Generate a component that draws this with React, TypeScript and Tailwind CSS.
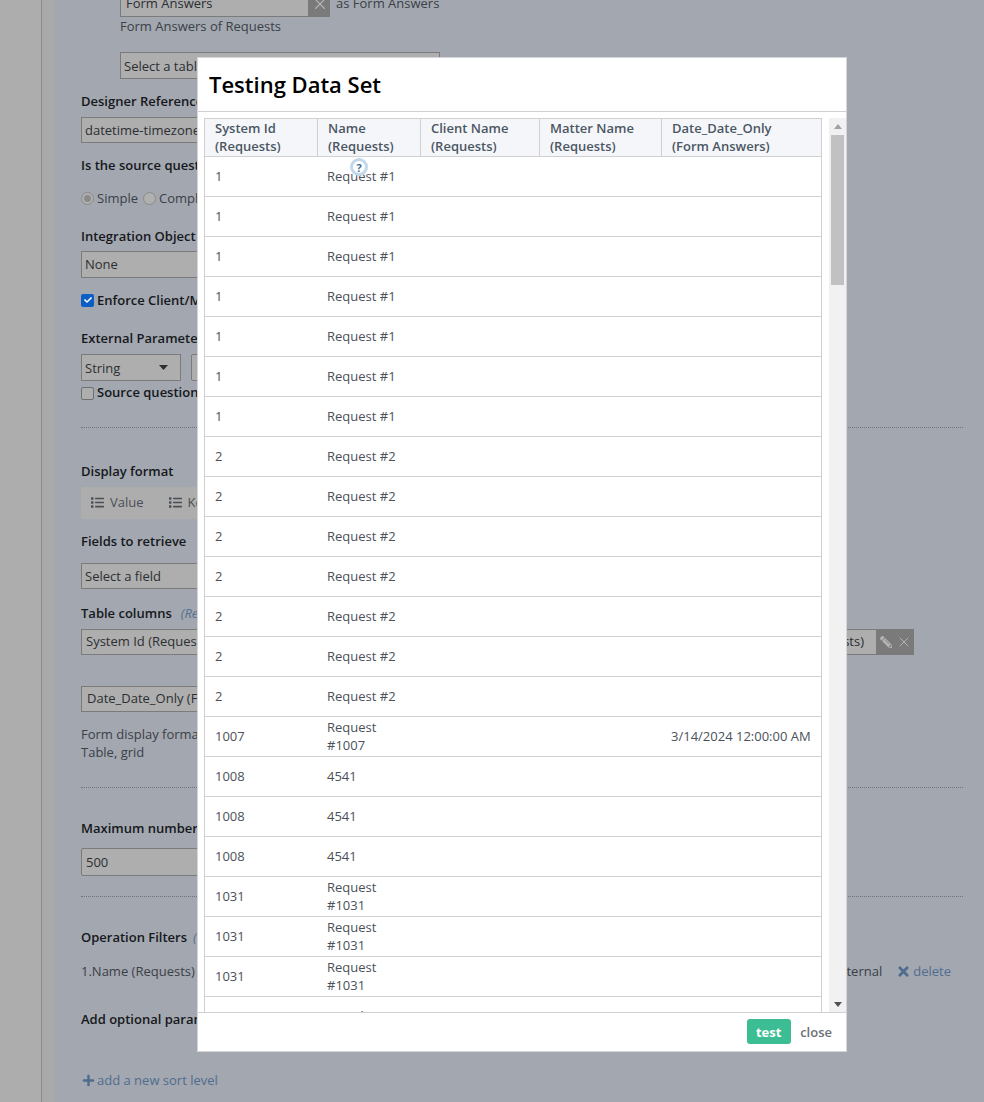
import React from "react";
import { FaList, FaPencilAlt, FaPlus, FaTimes, FaCheck } from "react-icons/fa";
import { X } from "lucide-react";

const rows: { id: string; name: string; date?: string }[] = [
  ...Array(7).fill({ id: "1", name: "Request #1" }),
  ...Array(7).fill({ id: "2", name: "Request #2" }),
  { id: "1007", name: "Request #1007", date: "3/14/2024 12:00:00 AM" },
  ...Array(3).fill({ id: "1008", name: "4541" }),
  ...Array(3).fill({ id: "1031", name: "Request #1031" }),
  { id: "1032", name: "Test data" },
];

const headers = [
  ["System Id", "(Requests)"],
  ["Name", "(Requests)"],
  ["Client Name", "(Requests)"],
  ["Matter Name", "(Requests)"],
  ["Date_Date_Only", "(Form Answers)"],
];

const Label = ({ className, children }: { className: string; children: React.ReactNode }) => (
  <div className={`h-[18px] font-semibold text-[#15181c] whitespace-nowrap ${className}`}>{children}</div>
);

const Field = ({ className, children }: { className: string; children: React.ReactNode }) => (
  <div className={`flex items-center border border-[#7b7b7b] bg-[#aeaeae] text-[#2b2f33] whitespace-nowrap ${className}`}>
    {children}
  </div>
);

const Dotted = ({ className }: { className: string }) => (
  <div className={`border-t border-dotted border-[#6f7278] ${className}`} />
);

const TestingModal = () => (
  <div className="absolute left-[197px] top-[57px] flex h-[995px] w-[650px] flex-col border border-[#d4d5d8] bg-white">
    {/* header */}
    <div className="flex h-[54px] shrink-0 items-center border-b border-[#d0d0d0] pb-[1px] pl-[11px] text-[22px] font-semibold text-black">
      Testing Data Set
    </div>

    {/* table + scrollbar */}
    <div className="flex min-h-0 flex-1 pl-[6px] pt-[6px]">
      <div className="h-full w-[618px] shrink-0 overflow-hidden border-x border-t border-[#d0d0d0]">
        <table className="w-[616px] table-fixed border-separate border-spacing-0 text-[13px] leading-[18px]">
          <colgroup>
            <col className="w-[113px]" />
            <col className="w-[103px]" />
            <col className="w-[119px]" />
            <col className="w-[122px]" />
            <col className="w-[159px]" />
          </colgroup>
          <thead>
            <tr className="h-[38px] bg-[#f5f6fa]">
              {headers.map((h, i) => (
                <th
                  key={h[0]}
                  className={`border-b border-[#d0d0d0] pb-[1px] pl-[10px] text-left font-semibold text-[#4b5663] ${i < 4 ? "border-r" : ""}`}
                >
                  {h[0]}
                  <br />
                  {h[1]}
                </th>
              ))}
            </tr>
          </thead>
          <tbody>
            {rows.map((r, i) => (
              <tr key={i} className="h-10 text-[#4a5159]">
                <td className="border-b border-[#d0d0d0] pb-[2px] pl-[10px]">{r.id}</td>
                <td className="border-b border-[#d0d0d0] pb-[2px] pl-[9px] pr-[10px]">{r.name}</td>
                <td className="border-b border-[#d0d0d0]" />
                <td className="border-b border-[#d0d0d0]" />
                <td className="border-b border-[#d0d0d0] pb-[2px] pl-[9px] whitespace-nowrap">{r.date}</td>
              </tr>
            ))}
          </tbody>
        </table>
      </div>
      <div className="ml-[7px] flex h-full w-[17px] shrink-0 flex-col items-center justify-between bg-[#f1f1f1] pb-[5px] pt-[6px]">
        <div className="flex w-full flex-col items-center">
          <svg width="8" height="5" viewBox="0 0 8 5" className="fill-[#a3a3a3]">
            <path d="M4 0 8 5H0z" />
          </svg>
          <div className="mt-[6px] h-[150px] w-[13px] bg-[#c1c1c1]" />
        </div>
        <svg width="8" height="5" viewBox="0 0 8 5" className="fill-[#505050]">
          <path d="M0 0h8L4 5z" />
        </svg>
      </div>
    </div>

    {/* footer */}
    <div className="flex h-[39px] shrink-0 items-center justify-end gap-[9px] border-t border-[#d0d0d0] pb-[1px] pr-[14px]">
      <button className="h-[25px] w-[44px] rounded-[3px] bg-[#3dbd94] pr-[1px] text-[13px] font-bold text-white">test</button>
      <button className="text-[13px] font-semibold text-[#6b7075]">close</button>
    </div>
  </div>
);

export default function App() {
  return (
    <div className="relative flex h-[1102px] w-[984px] overflow-hidden bg-[#a3a7af] text-[13px] leading-[18px] text-[#3a4048] [font-family:'Open_Sans',sans-serif]">
      {/* sidebar strip */}
      <div className="h-full w-[41px] shrink-0 bg-[#adadad]" />
      <div className="h-full w-[14px] shrink-0 border-l border-[#8c8c8c] bg-[#a9a9a9]" />

      {/* form behind the dialog */}
      <div className="w-[882px] shrink-0 pl-[26px]">
        <div className="-mt-[10px] ml-[39px] flex h-[27px] items-stretch">
          <Field className="w-[189px] pb-[1px] pl-[5px]">Form Answers</Field>
          <div className="flex w-[21px] items-center justify-center bg-[#7a7a7a] text-[#b5b5b5]">
            <X size={18} strokeWidth={1.5} />
          </div>
          <span className="ml-[6px] self-center pb-[1px]">as Form Answers</span>
        </div>
        <div className="ml-[39px] h-[18px]">Form Answers of Requests</div>
        <Field className="ml-[39px] mt-[17px] h-[27px] w-[320px] pl-[3px]">Select a table</Field>

        <Label className="mt-[13px]">Designer Reference Name</Label>
        <Field className="mt-[7px] h-[26px] w-[300px] pb-[1px] pl-[3px]">datetime-timezone</Field>

        <Label className="mt-[13px]">Is the source question</Label>
        <div className="mt-[15px] flex h-[18px] items-center">
          <span className="flex h-[13px] w-[13px] items-center justify-center rounded-full border border-[#8a8a8a] bg-[#b0b0b0]">
            <span className="h-[7px] w-[7px] rounded-full bg-[#8a8a8a]" />
          </span>
          <span className="ml-[3px]">Simple</span>
          <span className="ml-[5px] h-[13px] w-[13px] rounded-full border border-[#8a8a8a] bg-[#b0b0b0]" />
          <span className="ml-[3px]">Complex</span>
        </div>

        <Label className="mt-[20px]">Integration Object</Label>
        <Field className="mt-[6px] h-[27px] w-[300px] pb-[1px] pl-[3px]">None</Field>

        <div className="mt-[13px] flex h-[18px] items-center">
          <span className="flex h-[13px] w-[13px] items-center justify-center rounded-[2px] bg-[#0b5fc4] text-white">
            <FaCheck size={8} />
          </span>
          <span className="ml-[3px] font-semibold text-[#15181c]">Enforce Client/Matter</span>
        </div>

        <Label className="mt-[20px]">External Parameter</Label>
        <div className="mt-[7px] flex h-[27px] gap-[10px]">
          <Field className="w-[100px] justify-between pl-[3px] pr-[12px]">
            String
            <svg width="9" height="5" viewBox="0 0 9 5" className="fill-[#2b2f33]">
              <path d="M0 0h9L4.5 5z" />
            </svg>
          </Field>
          <div className="w-[200px] rounded-[2px] border border-[#7b7b7b] bg-[#aeaeae]" />
        </div>
        <div className="mt-[3px] flex h-[18px] items-center">
          <span className="h-[13px] w-[13px] rounded-[2px] border border-[#6f6f6f] bg-[#aeaeae]" />
          <span className="ml-[3px] -translate-y-[1px] font-semibold text-[#15181c]">Source question</span>
        </div>

        <Dotted className="mt-[25px] w-[882px]" />

        <Label className="mt-[34px]">Display format</Label>
        <div className="mt-[7px] flex h-[32px] w-[300px] items-center rounded-[3px] bg-[#adadad] pb-[2px] pl-[10px] text-[#4a4f55]">
          <FaList size={13} />
          <span className="ml-[6px]">Value</span>
          <span className="ml-[25px] flex items-center">
            <FaList size={13} />
            <span className="ml-[6px]">Key</span>
          </span>
        </div>

        <Label className="mt-[13px]">Fields to retrieve</Label>
        <Field className="mt-[13px] h-[26px] w-[300px] pb-[1px] pl-[3px]">Select a field</Field>

        <Label className="mt-[15px]">
          Table columns
          <span className="ml-[9px] font-normal italic text-[#55708f]">(Required)</span>
        </Label>
        <div className="mt-[7px] flex h-[26px] w-[833px] justify-between">
          <Field className="w-[300px] pb-[2px] pl-[4px]">System Id (Requests)</Field>
          <div className="flex">
            <Field className="w-[200px] justify-end pb-[2px] pr-[12px]">Matter Name (Requests)</Field>
            <div className="flex w-[37px] items-center justify-center gap-[4px] bg-[#7a7a7a] text-[#b5b5b5]">
              <FaPencilAlt size={12} className="-scale-x-100" />
              <X size={16} strokeWidth={1.5} />
            </div>
          </div>
        </div>
        <Field className="mt-[31px] h-[26px] w-[300px] pb-[2px] pl-[5px]">Date_Date_Only (Form Answers)</Field>

        <div className="mt-[13px] h-[18px]">Form display format</div>
        <div className="h-[18px]">Table, grid</div>

        <Dotted className="mt-[26px] w-[882px]" />

        <Label className="mt-[31px]">Maximum number of records</Label>
        <Field className="mt-[11px] h-[28px] w-[300px] rounded-[2px] border-[#5f5f5f] pb-[1px] pl-[4px]">500</Field>

        <Dotted className="mt-[20px] w-[882px]" />

        <Label className="mt-[31px]">
          Operation Filters
          <span className="ml-[6px] font-normal italic text-[#55708f]">(Optional)</span>
        </Label>
        <div className="mt-[16px] flex h-[18px] w-[870px] items-center justify-between">
          <span>1.Name (Requests)</span>
          <span className="flex items-center">
            <span>External</span>
            <span className="ml-[14px] flex items-center text-[#4f6d8f]">
              <FaTimes size={15} />
              <span className="ml-[2px]">delete</span>
            </span>
          </span>
        </div>

        <Label className="mt-[30px]">Add optional parameters</Label>

        <div className="mt-[43px] ml-[1px] flex h-[18px] items-center text-[#4f6d8f]">
          <FaPlus size={13} />
          <span className="ml-[2px]">add a new sort level</span>
        </div>
      </div>

      <TestingModal />

      {/* floating help bubble */}
      <div className="absolute left-[350px] top-[158px] flex h-[18px] w-[18px] items-center justify-center rounded-full border-[3px] border-[#c3d8ea] bg-white/80 text-[11px] font-bold leading-none text-[#3f6f96]">
        ?
      </div>
    </div>
  );
}
